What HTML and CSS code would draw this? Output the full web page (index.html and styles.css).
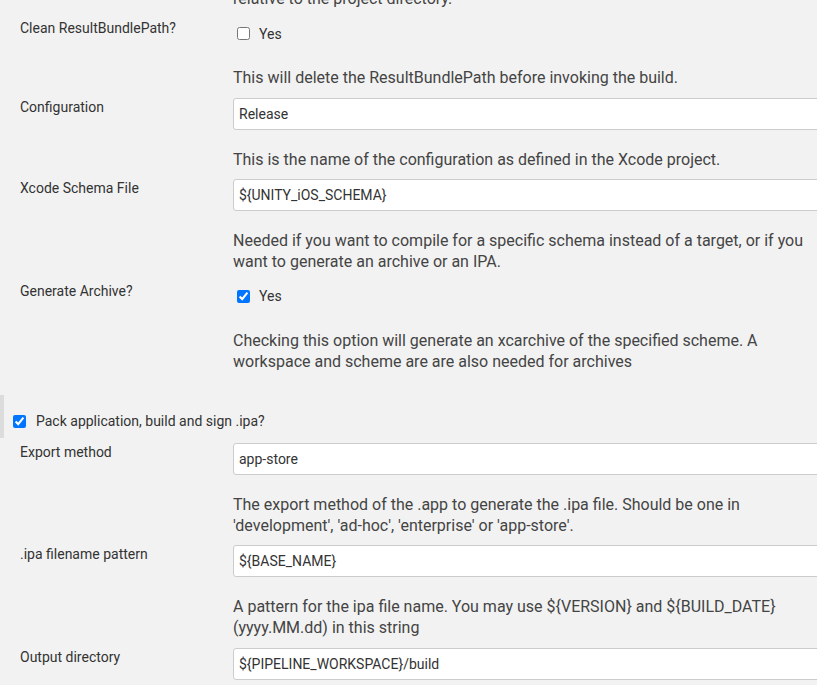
FILE: index.html
```html
<!DOCTYPE html>
<html>
<head>
<meta charset="utf-8">
<link rel="stylesheet" href="styles.css">
</head>
<body>
<div class="page">
  <div class="help help-top">relative to the project directory.</div>

  <div class="entry">
    <div class="label">Clean ResultBundlePath?</div>
    <div class="check-control"><label class="check"><input type="checkbox"><span>Yes</span></label></div>
  </div>
  <div class="help">This will delete the ResultBundlePath before invoking the build.</div>

  <div class="entry">
    <div class="label">Configuration</div>
    <div class="control"><input class="text" type="text" value="Release"></div>
  </div>
  <div class="help">This is the name of the configuration as defined in the Xcode project.</div>

  <div class="entry">
    <div class="label">Xcode Schema File</div>
    <div class="control"><input class="text" type="text" value="${UNITY_iOS_SCHEMA}"></div>
  </div>
  <div class="help">Needed if you want to compile for a specific schema instead of a target, or if you want to generate an archive or an IPA.</div>

  <div class="entry">
    <div class="label">Generate Archive?</div>
    <div class="check-control"><label class="check"><input type="checkbox" checked><span>Yes</span></label></div>
  </div>
  <div class="help">Checking this option will generate an xcarchive of the specified scheme. A workspace and scheme are are also needed for archives</div>

  <div class="section-head">
    <label class="check"><input type="checkbox" checked><span>Pack application, build and sign .ipa?</span></label>
  </div>

  <div class="entry">
    <div class="label">Export method</div>
    <div class="control"><input class="text" type="text" value="app-store"></div>
  </div>
  <div class="help">The export method of the .app to generate the .ipa file. Should be one in 'development', 'ad-hoc', 'enterprise' or 'app-store'.</div>

  <div class="entry">
    <div class="label">.ipa filename pattern</div>
    <div class="control"><input class="text" type="text" value="${BASE_NAME}"></div>
  </div>
  <div class="help">A pattern for the ipa file name. You may use ${VERSION} and ${BUILD_DATE} (yyyy.MM.dd) in this string</div>

  <div class="entry">
    <div class="label">Output directory</div>
    <div class="control"><input class="text" type="text" value="${PIPELINE_WORKSPACE}/build"></div>
  </div>
</div>
</body>
</html>
```

FILE: styles.css
```css
html, body {
  margin: 0;
  padding: 0;
  background: #f2f2f2;
  overflow: hidden;
}
body {
  font-family: Roboto, "Liberation Sans", sans-serif;
  color: #333;
  width: 817px;
  height: 685px;
}
.page {
  display: flex;
  flex-direction: column;
}
.help {
  margin-left: 233px;
  padding: 19px 10px 9.5px 0;
  font-size: 16px;
  line-height: 21px;
  color: #444;
  max-width: 574px;
}
.help-top {
  margin-top: -12px;
  padding-top: 0;
  padding-bottom: 10px;
}
.entry {
  display: grid;
  grid-template-columns: 213px 1fr;
  padding-left: 20px;
  align-items: start;
}
.label {
  font-size: 14px;
  line-height: 18px;
  color: #333;
}
.control {
  display: flex;
  min-width: 0;
}
.text {
  box-sizing: border-box;
  width: 640px;
  flex: none;
  height: 32px;
  margin: 0;
  padding: 0 5px;
  border: 1px solid #ccc;
  border-radius: 3px;
  background: #fff;
  font-family: Roboto, "Liberation Sans", sans-serif;
  font-size: 14px;
  color: #333;
  outline: none;
}
.check-control {
  box-sizing: border-box;
  height: 29px;
  padding-top: 1px;
  padding-bottom: 0.5px;
  display: flex;
  align-items: center;
}
.check {
  display: flex;
  align-items: center;
  font-size: 14px;
  color: #333;
}
.check input {
  margin: 3px 3px 3px 4px;
}
.check span {
  margin-left: 6px;
}
.section-head {
  margin-top: 13.5px;
  height: 43px;
  box-sizing: border-box;
  border-left: 4px solid #dcdcdc;
  padding: 17px 0 0 5px;
  margin-bottom: 5px;
}
.section-head .check span {
  margin-left: 7px;
}
```
